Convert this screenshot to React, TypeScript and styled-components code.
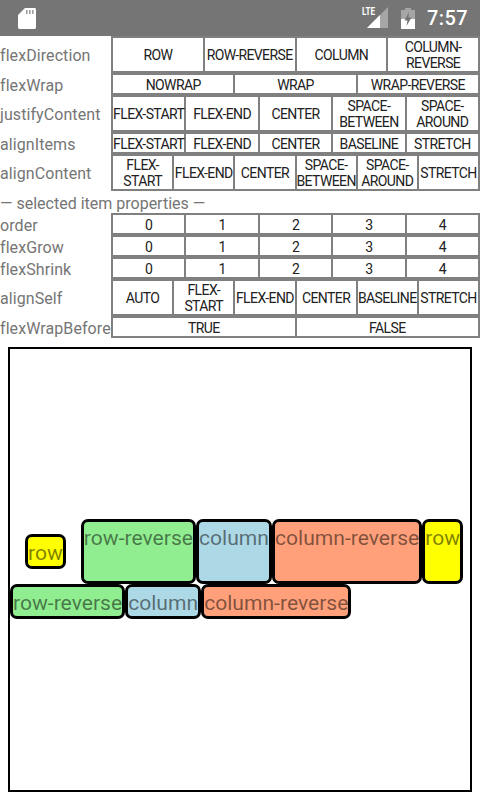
import React from 'react'
import styled, { createGlobalStyle } from 'styled-components'

const GlobalStyle = createGlobalStyle`
  html, body {
    margin: 0;
    padding: 0;
    background: #fff;
    font-family: Roboto, "Liberation Sans", sans-serif;
  }
  * { box-sizing: border-box; }
`

const Page = styled.div`
  width: 480px;
  height: 800px;
  overflow: hidden;
  display: flex;
  flex-direction: column;
`

const StatusBar = styled.div`
  height: 36px;
  flex: none;
  background: #757575;
  display: flex;
  align-items: center;
  padding: 0 12px 0 18px;
`

const StatusRight = styled.div`
  margin-left: auto;
  display: flex;
  align-items: center;
`

const BatterySlot = styled.span`
  display: flex;
  margin-left: 12px;
`

const Clock = styled.span`
  font-size: 20px;
  font-weight: 500;
  color: #fff;
  margin-left: 12px;
  letter-spacing: 0.4px;
`

const Row = styled.div`
  display: flex;
  align-items: center;
  flex: none;
`

const Label = styled.div<{ $tall?: boolean }>`
  width: 111px;
  flex: none;
  padding-top: ${p => (p.$tall ? 1 : 2)}px;
  font-size: 16px;
  letter-spacing: 0.08px;
  color: #757575;
  white-space: nowrap;
`

const Heading = styled.div`
  height: 22px;
  flex: none;
  font-size: 16px;
  line-height: 25px;
  color: #757575;
`

const Segments = styled.div`
  flex: 1;
  min-width: 0;
  display: flex;
  border: 1px solid #808080;
`

const Cell = styled.div<{ $tall?: boolean }>`
  flex: 1 1 0;
  min-width: 0;
  height: ${p => (p.$tall ? 35 : 20)}px;
  padding-top: ${p => (p.$tall ? 0 : 2)}px;
  border: 1px solid #808080;
  display: flex;
  align-items: center;
  justify-content: center;
  text-align: center;
  font-size: 14px;
  line-height: 16px;
  letter-spacing: -0.6px;
  color: #212121;
`

const Canvas = styled.div`
  flex: none;
  height: 445px;
  margin: 9px 8px 0;
  padding-bottom: 1px;
  border: 2px solid #000;
  display: flex;
  flex-wrap: wrap;
  align-content: center;
  align-items: flex-start;
`

const Item = styled.div<{ $bg: string; $h: number; $ml?: number; $mr?: number; $mt?: number }>`
  height: ${p => p.$h}px;
  margin: ${p => p.$mt ?? 0}px ${p => p.$mr ?? 0}px 0 ${p => p.$ml ?? 0}px;
  background: ${p => p.$bg};
  border: 3px solid #000;
  border-radius: 7px;
  font-size: 21.1px;
  line-height: 31px;
  color: rgba(0, 0, 0, 0.5);
  white-space: nowrap;
`

const SdIcon = () => (
  <svg width="18" height="21" viewBox="0 0 18 21">
    <path d="M7 0H16.5C17.3 0 18 .7 18 1.5V19.5C18 20.3 17.3 21 16.5 21H1.5C.7 21 0 20.3 0 19.5V7Z" fill="#fff" />
    <path d="M8 2h1.6v4H8zM11 2h1.6v4H11zM14 2h1.6v4H14z" fill="#9e9e9e" />
  </svg>
)

const SignalIcon = () => (
  <svg width="27" height="30" viewBox="0 -4 27 30">
    <text x="0" y="8" fontFamily="Roboto, sans-serif" fontSize="11" fontWeight="700" fill="#fff" textLength="13" lengthAdjust="spacingAndGlyphs">LTE</text>
    <path d="M26 0V21H5Z" fill="#a6a6a6" />
    <path d="M18 8V21H5Z" fill="#fff" />
  </svg>
)

const BatteryIcon = () => (
  <svg width="14" height="21" viewBox="0 0 14 21">
    <path d="M4 0H10V2H14V21H0V2H4Z" fill="#a6a6a6" />
    <path d="M0 11H14V21H0Z" fill="#fff" />
    <path d="M8 4L3.5 12.5H6.4L5.5 18L10.5 9.5H7.4Z" fill="#757575" />
  </svg>
)

const rows: { name: string; options: string[]; tall?: boolean }[] = [
  { name: 'flexDirection', options: ['ROW', 'ROW-REVERSE', 'COLUMN', 'COLUMN-REVERSE'], tall: true },
  { name: 'flexWrap', options: ['NOWRAP', 'WRAP', 'WRAP-REVERSE'] },
  { name: 'justifyContent', options: ['FLEX-START', 'FLEX-END', 'CENTER', 'SPACE-BETWEEN', 'SPACE-AROUND'], tall: true },
  { name: 'alignItems', options: ['FLEX-START', 'FLEX-END', 'CENTER', 'BASELINE', 'STRETCH'] },
  { name: 'alignContent', options: ['FLEX-START', 'FLEX-END', 'CENTER', 'SPACE-BETWEEN', 'SPACE-AROUND', 'STRETCH'], tall: true },
]

const nums = ['0', '1', '2', '3', '4']

const itemRows: { name: string; options: string[]; tall?: boolean }[] = [
  { name: 'order', options: nums },
  { name: 'flexGrow', options: nums },
  { name: 'flexShrink', options: nums },
  { name: 'alignSelf', options: ['AUTO', 'FLEX-START', 'FLEX-END', 'CENTER', 'BASELINE', 'STRETCH'], tall: true },
  { name: 'flexWrapBefore', options: ['TRUE', 'FALSE'] },
]

const OptionRow = ({ name, options, tall }: { name: string; options: string[]; tall?: boolean }) => (
  <Row>
    <Label $tall={tall}>{name}</Label>
    <Segments>
      {options.map(o => (
        <Cell key={o} $tall={tall}>{o}</Cell>
      ))}
    </Segments>
  </Row>
)

const App: React.FC = () => {
  return (
    <Page>
      <GlobalStyle />
      <StatusBar>
        <SdIcon />
        <StatusRight>
          <SignalIcon />
          <BatterySlot>
            <BatteryIcon />
          </BatterySlot>
          <Clock>7:57</Clock>
        </StatusRight>
      </StatusBar>
      {rows.map(r => <OptionRow key={r.name} {...r} />)}
      <Heading>— selected item properties —</Heading>
      {itemRows.map(r => <OptionRow key={r.name} {...r} />)}
      <Canvas>
        <Item $bg="yellow" $h={35} $ml={15} $mr={15} $mt={15}>row</Item>
        <Item $bg="lightgreen" $h={65}>row-reverse</Item>
        <Item $bg="lightblue" $h={65}>column</Item>
        <Item $bg="lightsalmon" $h={65}>column-reverse</Item>
        <Item $bg="yellow" $h={65}>row</Item>
        <Item $bg="lightgreen" $h={35}>row-reverse</Item>
        <Item $bg="lightblue" $h={35}>column</Item>
        <Item $bg="lightsalmon" $h={35}>column-reverse</Item>
      </Canvas>
    </Page>
  )
}

export default App
